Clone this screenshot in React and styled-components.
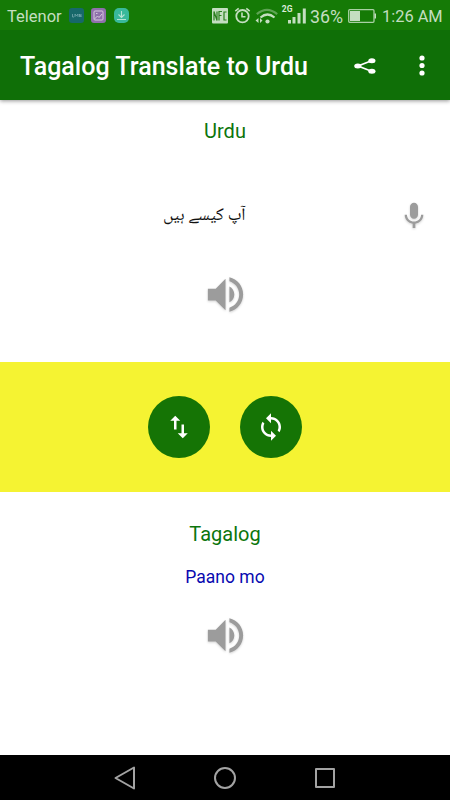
import React from "react";
import styled, { createGlobalStyle } from "styled-components";

const GlobalStyle = createGlobalStyle`
  * { box-sizing: border-box; }
  body { margin: 0; background: #fff; font-family: Roboto, "Noto Sans", sans-serif; }
  svg { display: block; flex: none; overflow: visible; }
`;

const Screen = styled.div`
  width: 450px;
  height: 800px;
  display: flex;
  flex-direction: column;
  overflow: hidden;
  background: #fff;
`;

const StatusBar = styled.div`
  height: 30px;
  flex: none;
  display: flex;
  align-items: center;
  justify-content: space-between;
  padding: 1px 8px 0 7px;
  background: #157a06;
  color: #c4dec0;
  white-space: nowrap;
  z-index: 2;
`;

const StatusGroup = styled.div`
  display: flex;
  align-items: center;
`;

const Carrier = styled.span`
  width: 61.5px;
  padding-top: 1px;
  font-size: 16.5px;
`;

const StatusText = styled.span`
  width: ${(p) => p.$width}px;
  margin-left: ${(p) => p.$gap}px;
  padding-top: 1px;
  font-size: ${(p) => p.$size}px;
`;

const Notice = styled.span`
  width: 15px;
  height: 15px;
  margin-right: 7.5px;
  border-radius: ${(p) => p.$radius}px;
  background: ${(p) => p.$color};
`;

const AppBar = styled.header`
  height: 70px;
  flex: none;
  display: flex;
  align-items: center;
  padding: 1px 25px 0 20px;
  background: #0f6f07;
  box-shadow: 0 1px 4px rgba(0, 0, 0, 0.42);
  z-index: 1;
`;

const Title = styled.h1`
  flex: 1;
  margin: 3px 0 0;
  font-size: 25px;
  line-height: 30px;
  font-weight: 500;
  letter-spacing: 0.03px;
  color: #fff;
  white-space: nowrap;
`;

const Actions = styled.div`
  display: flex;
  align-items: center;
  gap: 43px;
`;

const Panel = styled.section`
  height: ${(p) => p.$height}px;
  flex: none;
  display: flex;
  flex-direction: column;
  align-items: center;
  padding-top: ${(p) => p.$top}px;
`;

const Language = styled.h2`
  margin: 0;
  font-size: 20px;
  line-height: 24px;
  font-weight: 400;
  color: #0c750c;
`;

const PhraseRow = styled.div`
  width: 100%;
  height: 36px;
  margin-top: 55px;
  padding: 0 20.5px 0 42px;
  display: flex;
  align-items: center;
`;

const SourcePhrase = styled.p`
  flex: 1;
  margin: 0;
  padding-right: 31px;
  text-align: center;
  font-family: "Noto Naskh Arabic", "DejaVu Sans", sans-serif;
  font-size: 17.7px;
  line-height: 30px;
  color: #111;
`;

const ResultPhrase = styled.p`
  margin: 20px 0 0;
  font-size: 17.5px;
  line-height: 22px;
  color: #0909b0;
`;

const IconButton = styled.button`
  display: flex;
  padding: 0;
  margin: ${(p) => p.$top || 0}px 0 0;
  border: 0;
  background: none;
  color: #9c9c9c;
  filter: drop-shadow(0 1px 1px rgba(0, 0, 0, 0.18));
`;

const ControlBand = styled.section`
  height: 130px;
  flex: none;
  display: flex;
  align-items: center;
  justify-content: center;
  gap: 30px;
  background: #f5f332;
`;

const RoundButton = styled.button`
  width: 62px;
  height: 62px;
  padding: 0;
  border: 0;
  border-radius: 50%;
  display: flex;
  align-items: center;
  justify-content: center;
  background: #157405;
  color: #fff;
`;

const NavBar = styled.nav`
  height: 45px;
  flex: none;
  margin-top: auto;
  display: flex;
  align-items: center;
  justify-content: center;
  gap: 76px;
  background: #000;
`;

const Glyph = ({ size, d }) => (
  <svg width={size} height={size} viewBox="0 0 24 24" fill="currentColor">
    <path d={d} />
  </svg>
);

const paths = {
  volume:
    "M3 9v6h4l5 5V4L7 9H3zm13.5 3c0-1.77-1.02-3.29-2.5-4.03v8.05c1.48-.73 2.5-2.25 2.5-4.02zM14 3.23v2.06c2.89.86 5 3.54 5 6.71s-2.11 5.85-5 6.71v2.06c4.01-.91 7-4.49 7-8.77s-2.99-7.86-7-8.77z",
  mic: "M12 14c1.66 0 2.99-1.34 2.99-3L15 5c0-1.66-1.34-3-3-3S9 3.34 9 5v6c0 1.66 1.34 3 3 3zm5.3-3c0 3-2.54 5.1-5.3 5.1S6.7 14 6.7 11H5c0 3.41 2.72 6.23 6 6.72V21h2v-3.28c3.28-.48 6-3.3 6-6.72h-1.7z",
  swap: "M16 17.01V10h-2v7.01h-3L15 21l4-3.99h-3zM9 3L5 6.99h3V14h2V6.99h3L9 3z",
  sync: "M12 4V1L8 5l4 4V6c3.31 0 6 2.69 6 6 0 1.01-.25 1.97-.7 2.8l1.46 1.46C19.54 15.03 20 13.57 20 12c0-4.42-3.58-8-8-8zm0 14c-3.31 0-6-2.69-6-6 0-1.01.25-1.97.7-2.8L5.24 7.74C4.46 8.97 4 10.43 4 12c0 4.42 3.58 8 8 8v3l4-4-4-4v3z",
};

const Notices = () => (
  <>
    <Notice $color="#17686a" $radius={3}>
      <svg width="15" height="15" fill="none" stroke="#74a8ad" strokeWidth="0.8">
        <path d="M3.5 6v3h1.5M6 9V6l1.5 2L9 6v3M10.5 9V6l1.5 3V6" />
      </svg>
    </Notice>
    <Notice $color="#8f70ac" $radius={3}>
      <svg width="15" height="15" fill="none" stroke="#d5cade" strokeWidth="1">
        <rect x="3" y="3" width="9" height="9" rx="1" />
        <path d="M3.5 11l3-3 1.5 1.5 3-3.5M5 5.5h1.5" />
      </svg>
    </Notice>
    <Notice $color="#39b99b" $radius={5}>
      <svg width="15" height="15" fill="none" stroke="#b5e3d4" strokeWidth="1.1">
        <path d="M7.5 3v6.5M4.5 6.5l3 3 3-3M3 11.5h9" />
      </svg>
    </Notice>
  </>
);

const StatusIcons = () => (
  <svg width="97" height="24" viewBox="212 3.5 97 24" fill="none" stroke="#c4dec0">
    <rect x="212" y="7.5" width="16" height="15.5" rx="1" fill="#c4dec0" stroke="none" />
    <path d="M214 20v-9l3 9v-9M219 20v-9h3M219 15h2.5M226.5 11.5h-2.5v8h2.5" stroke="#2b7f1d" strokeWidth="1.2" />
    <circle cx="242.5" cy="15.7" r="6.2" strokeWidth="1.8" />
    <path d="M242 12v4.2h3.5M235.3 10.7l3.4-2.9M249.7 10.7l-3.4-2.9" strokeWidth="1.6" />
    <path d="M256.8 13.6q10.2-8.5 20.4 0" strokeWidth="2.2" opacity=".42" />
    <path d="M260.5 17q7-6 14 0" strokeWidth="2.2" />
    <circle cx="267.5" cy="21" r="2.1" fill="#c4dec0" stroke="none" />
    <path d="M258.5 17.5v5l-3-2.5zM260 17.5v5l2.5-2.5z" fill="#c4dec0" stroke="none" />
    <text x="281.8" y="11.3" fontSize="8.5" fontWeight="700" fill="#dcecd9" stroke="none">2G</text>
    <path d="M289.5 19.5V23M294 16.5V23M299 12.5V23M304.3 8v15" strokeWidth="3" />
  </svg>
);

const Battery = () => (
  <svg width="28" height="14" viewBox="0 0 28 14">
    <rect x="0.7" y="0.7" width="25.3" height="12.6" rx="1" fill="none" stroke="#a9d0a4" strokeWidth="1.3" />
    <path d="M2 2h10v10H2z" fill="#c4dec0" />
    <path d="M26.5 4.5h1.5v5h-1.5z" fill="#c4dec0" />
  </svg>
);

export default function App() {
  return (
    <>
      <GlobalStyle />
      <Screen>
        <StatusBar>
          <StatusGroup>
            <Carrier>Telenor</Carrier>
            <Notices />
          </StatusGroup>
          <StatusGroup>
            <StatusIcons />
            <StatusText $width={38} $gap={1} $size={17.8}>36%</StatusText>
            <Battery />
            <StatusText $width={60} $gap={6} $size={16.4}>1:26 AM</StatusText>
          </StatusGroup>
        </StatusBar>
        <AppBar>
          <Title>Tagalog Translate to Urdu</Title>
          <Actions>
            <svg width="22" height="16" viewBox="0 0 22 16" fill="#fff">
              <path d="M17.5 2.7L4 8l13.5 5.3" fill="none" stroke="#fff" strokeWidth="1.7" />
              <ellipse cx="3.8" cy="8" rx="3.6" ry="2.5" />
              <ellipse cx="17.9" cy="2.7" rx="3.6" ry="2.5" />
              <ellipse cx="17.9" cy="13.3" rx="3.6" ry="2.5" />
            </svg>
            <svg width="6" height="21" viewBox="0 0 6 21" fill="#fff">
              <circle cx="3" cy="3" r="2.6" />
              <circle cx="3" cy="10.5" r="2.6" />
              <circle cx="3" cy="18" r="2.6" />
            </svg>
          </Actions>
        </AppBar>
        <Panel $height={262} $top={19}>
          <Language>Urdu</Language>
          <PhraseRow>
            <SourcePhrase lang="ur" dir="rtl">آپ کیسے ہیں</SourcePhrase>
            <IconButton aria-label="Speak">
              <Glyph size={32} d={paths.mic} />
            </IconButton>
          </PhraseRow>
          <IconButton $top={36.5} aria-label="Listen to Urdu">
            <Glyph size={47} d={paths.volume} />
          </IconButton>
        </Panel>
        <ControlBand>
          <RoundButton aria-label="Swap languages">
            <Glyph size={30} d={paths.swap} />
          </RoundButton>
          <RoundButton aria-label="Translate">
            <Glyph size={30} d={paths.sync} />
          </RoundButton>
        </ControlBand>
        <Panel $height={263} $top={30}>
          <Language>Tagalog</Language>
          <ResultPhrase>Paano mo</ResultPhrase>
          <IconButton $top={24} aria-label="Listen to Tagalog">
            <Glyph size={47} d={paths.volume} />
          </IconButton>
        </Panel>
        <NavBar>
          <svg width="24" height="24" fill="none" stroke="#a3a3a3" strokeWidth="2" strokeLinejoin="round">
            <path d="M2.5 12L21 1.5v21z" />
          </svg>
          <svg width="24" height="24" fill="none" stroke="#a3a3a3" strokeWidth="2">
            <circle cx="12" cy="12" r="10" />
          </svg>
          <svg width="24" height="24" fill="none" stroke="#a3a3a3" strokeWidth="2" strokeLinejoin="round">
            <rect x="3" y="3" width="18" height="18" />
          </svg>
        </NavBar>
      </Screen>
    </>
  );
}
